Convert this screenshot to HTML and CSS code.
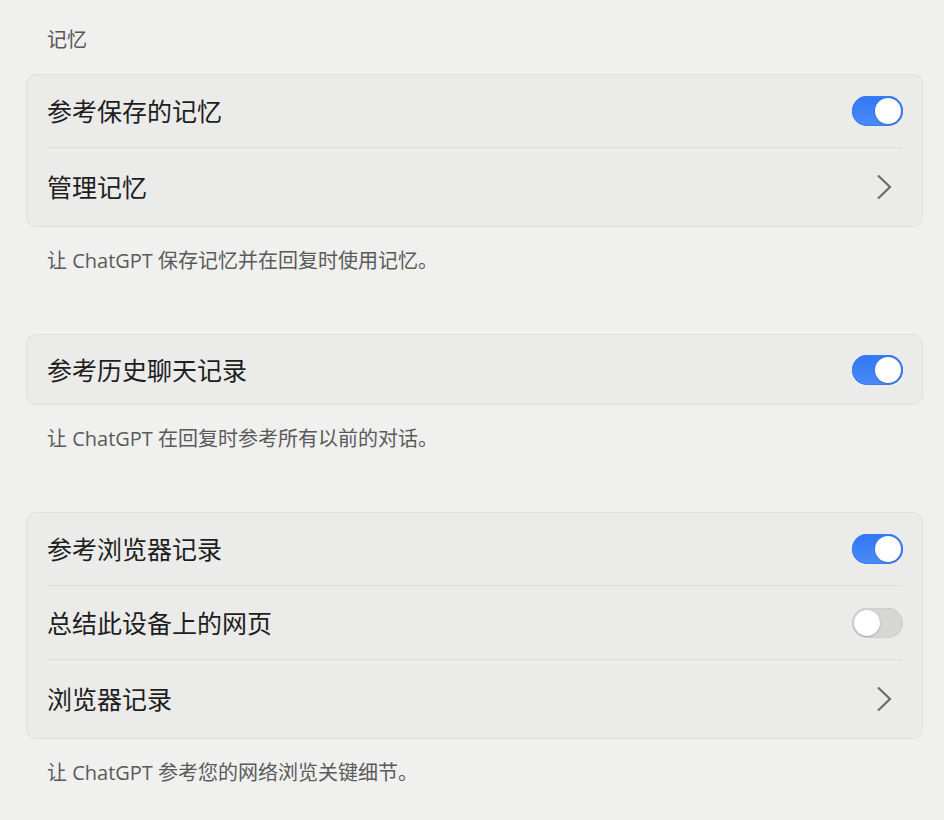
FILE: index.html
```html
<!DOCTYPE html>
<html lang="zh-CN">
<head>
<meta charset="utf-8">
<title>记忆</title>
<link rel="stylesheet" href="styles.css">
</head>
<body>
<main class="page">
  <h2 class="section-title">记忆</h2>

  <section class="card">
    <div class="row row-first">
      <span class="label">参考保存的记忆</span>
      <span class="toggle on"><span class="knob"></span></span>
    </div>
    <div class="row row-last">
      <span class="label">管理记忆</span>
      <svg class="chevron" width="16" height="26" viewBox="0 0 16 26"><path d="M2 1.5 L14 13 L2 24.5" fill="none" stroke="#6b6b6b" stroke-width="2.2" stroke-linecap="butt" stroke-linejoin="miter"/></svg>
    </div>
  </section>
  <p class="desc">让 ChatGPT 保存记忆并在回复时使用记忆。</p>

  <section class="card">
    <div class="row row-single">
      <span class="label">参考历史聊天记录</span>
      <span class="toggle on"><span class="knob"></span></span>
    </div>
  </section>
  <p class="desc">让 ChatGPT 在回复时参考所有以前的对话。</p>

  <section class="card">
    <div class="row row-first">
      <span class="label">参考浏览器记录</span>
      <span class="toggle on"><span class="knob"></span></span>
    </div>
    <div class="row row-mid">
      <span class="label">总结此设备上的网页</span>
      <span class="toggle"><span class="knob"></span></span>
    </div>
    <div class="row row-last">
      <span class="label">浏览器记录</span>
      <svg class="chevron" width="16" height="26" viewBox="0 0 16 26"><path d="M2 1.5 L14 13 L2 24.5" fill="none" stroke="#6b6b6b" stroke-width="2.2" stroke-linecap="butt" stroke-linejoin="miter"/></svg>
    </div>
  </section>
  <p class="desc">让 ChatGPT 参考您的网络浏览关键细节。</p>
</main>
</body>
</html>
```

FILE: styles.css
```css
html, body {
  margin: 0;
  padding: 0;
  background: #f0f0ef;
}

body {
  font-family: "Open Sans", "Noto Sans CJK SC", "Noto Sans", sans-serif;
  color: #1f1f1f;
}

.page {
  width: 897px;
  margin-left: 26px;
  padding-top: 28px;
}

.section-title {
  margin: 0 0 22px 21px;
  font-size: 20px;
  line-height: 24px;
  font-weight: 400;
  color: #575757;
}

.card {
  background: #ebebea;
  border: 1px solid #e0e0df;
  border-radius: 10px;
  padding: 0 19px 0 20px;
}

.row {
  display: flex;
  align-items: center;
  justify-content: space-between;
  height: 72px;
}

.row + .row {
  border-top: 1px solid #dfdfde;
}

.row-first { height: 72px; }
.row-mid { height: 73px; }
.row-last { height: 78px; }
.row-single { height: 69px; }

.label {
  font-size: 25px;
  line-height: 30px;
  font-weight: 400;
  color: #1e1e1e;
}

.desc {
  margin: 22px 0 61px 21px;
  font-size: 20px;
  line-height: 24px;
  color: #5a5a5a;
}

.toggle {
  position: relative;
  display: block;
  width: 51px;
  height: 30px;
  border-radius: 15px;
  background: #d6d6d5;
  box-shadow: inset 0 0 0 1px #cfcfce;
}

.toggle.on {
  background: linear-gradient(180deg, #3277f4 0%, #4b8bf7 100%);
  box-shadow: inset 0 0 0 1px #3a7cf2;
}

.knob {
  position: absolute;
  top: 2px;
  left: 2px;
  width: 26px;
  height: 26px;
  border-radius: 50%;
  background: #fff;
  box-shadow: 0 0.5px 1.5px rgba(0, 0, 0, 0.35);
}

.toggle.on .knob {
  left: 23px;
}

.chevron {
  display: block;
  margin-right: 11px;
}
```
